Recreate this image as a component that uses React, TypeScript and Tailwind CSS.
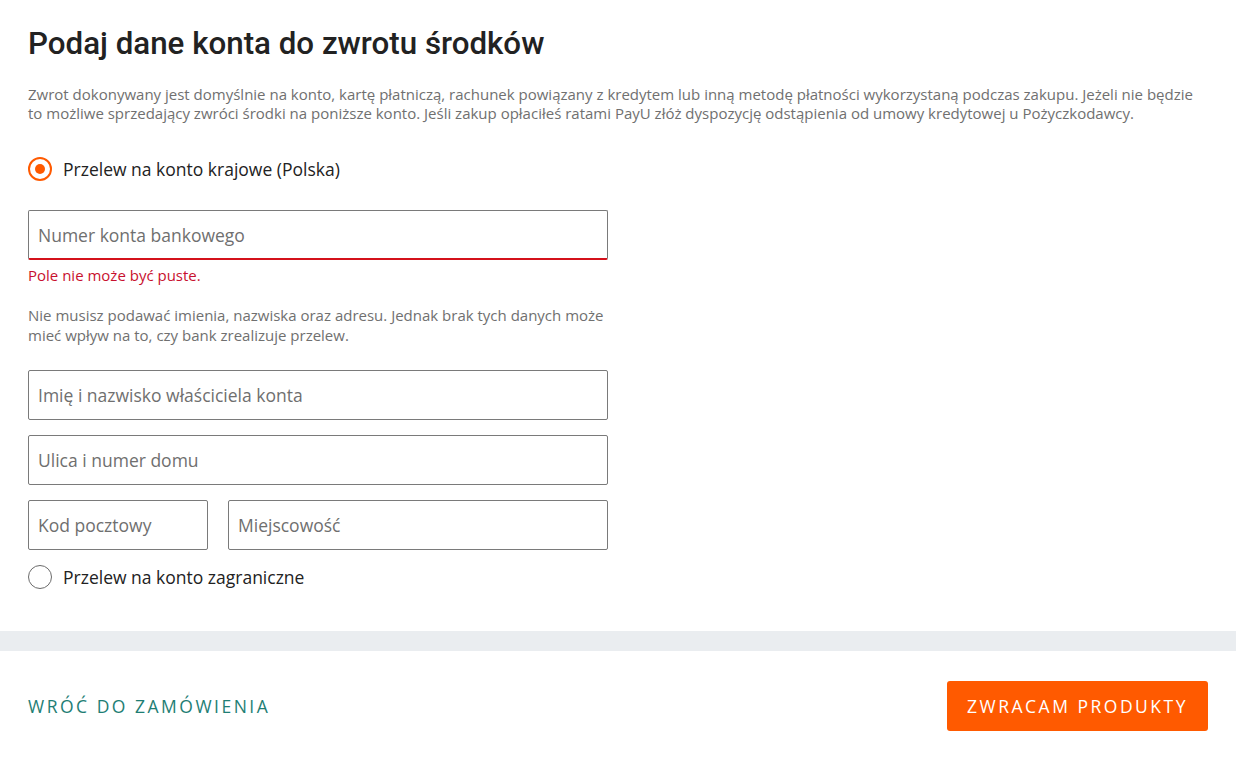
import { useState } from "react";

function Radio({ checked, label, onClick }: { checked: boolean; label: string; onClick: () => void }) {
  return (
    <label onClick={onClick} className="flex items-center gap-[11px] cursor-pointer">
      <span
        className={
          checked
            ? "w-6 h-6 rounded-full border-2 border-[#ff5a00] flex items-center justify-center"
            : "w-6 h-6 rounded-full border border-[#6b6b6b] flex items-center justify-center"
        }
      >
        {checked && <span className="w-[10px] h-[10px] rounded-full bg-[#ff5a00]" />}
      </span>
      <span className="text-[17.5px] leading-[24px] text-[#222]">{label}</span>
    </label>
  );
}

function Field({ placeholder, error, className }: { placeholder: string; error?: boolean; className?: string }) {
  return (
    <input
      placeholder={placeholder}
      className={
        "h-[50px] px-[9px] text-[17.5px] text-[#222] placeholder:text-[#6f6f6f] border border-[#7a7a7a] rounded-[2px] outline-none " +
        (error ? "border-b-2 border-b-[#d4111b] " : "") +
        (className ?? "")
      }
    />
  );
}

export default function App() {
  const [method, setMethod] = useState("pl");

  return (
    <div className="bg-white min-h-screen" style={{ fontFamily: '"Open Sans", sans-serif' }}>
      <div className="px-7 pt-[26px] pb-[42px]">
        <h1 className="text-[31.3px] font-medium text-[#222] leading-[36px]" style={{ fontFamily: "Roboto, sans-serif" }}>
          Podaj dane konta do zwrotu środków
        </h1>
        <p className="mt-[23px] text-[15px] leading-[19px] text-[#707070] max-w-[1180px]">
          Zwrot dokonywany jest domyślnie na konto, kartę płatniczą, rachunek powiązany z kredytem lub inną metodę płatności wykorzystaną podczas zakupu. Jeżeli nie będzie to możliwe sprzedający zwróci środki na poniższe konto. Jeśli zakup opłaciłeś ratami PayU złóż dyspozycję odstąpienia od umowy kredytowej u Pożyczkodawcy.
        </p>
        <div className="mt-[34px]">
          <Radio checked={method === "pl"} label="Przelew na konto krajowe (Polska)" onClick={() => setMethod("pl")} />
        </div>
        {method === "pl" && (
          <div className="w-[580px] mt-[29px] flex flex-col">
            <Field placeholder="Numer konta bankowego" error />
            <p className="mt-[6px] text-[15px] leading-[19px] text-[#c8102e]">Pole nie może być puste.</p>
            <p className="mt-[20px] text-[15px] leading-[20px] text-[#707070]">
              Nie musisz podawać imienia, nazwiska oraz adresu. Jednak brak tych danych może mieć wpływ na to, czy bank zrealizuje przelew.
            </p>
            <div className="mt-[25px] flex flex-col gap-[15px]">
              <Field placeholder="Imię i nazwisko właściciela konta" />
              <Field placeholder="Ulica i numer domu" />
              <div className="flex gap-[20px]">
                <Field placeholder="Kod pocztowy" className="w-[180px]" />
                <Field placeholder="Miejscowość" className="flex-1 min-w-0" />
              </div>
            </div>
          </div>
        )}
        <div className="mt-[15px]">
          <Radio checked={method === "int"} label="Przelew na konto zagraniczne" onClick={() => setMethod("int")} />
        </div>
      </div>
      <div className="h-[20px] bg-[#eaedf0]" />
      <div className="px-7 py-[30px] flex items-center justify-between">
        <a href="#order" className="text-[17.5px] tracking-[2.5px] text-[#1e7e74] uppercase">
          Wróć do zamówienia
        </a>
        <button className="h-[50px] px-[20px] bg-[#ff5a00] rounded-[3px] text-white text-[17.5px] tracking-[2.5px] uppercase font-medium">
          Zwracam produkty
        </button>
      </div>
    </div>
  );
}
